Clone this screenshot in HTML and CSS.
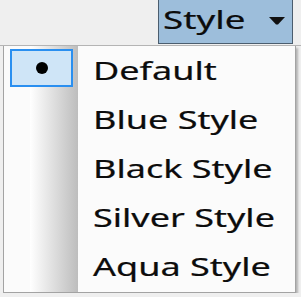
FILE: index.html
```html
<!DOCTYPE html>
<html lang="en">
<head>
  <meta charset="UTF-8">
  <title>Style Menu</title>
  <link rel="stylesheet" href="styles.css">
</head>
<body>

<div class="toolbar">
  <div class="style-btn">
    <span class="wide">Style</span>
    <svg class="arrow" width="16" height="8" viewBox="0 0 16 8">
      <path d="M0 0 H16 L9 7.5 H7 Z" fill="#111"/>
    </svg>
  </div>
</div>

<div class="menu">
  <div class="item">
    <div class="check checked"><span class="dot"></span></div>
    <span class="label wide">Default</span>
  </div>
  <div class="item">
    <div class="check"></div>
    <span class="label wide">Blue Style</span>
  </div>
  <div class="item">
    <div class="check"></div>
    <span class="label wide">Black Style</span>
  </div>
  <div class="item">
    <div class="check"></div>
    <span class="label wide">Silver Style</span>
  </div>
  <div class="item">
    <div class="check"></div>
    <span class="label wide">Aqua Style</span>
  </div>
</div>

</body>
</html>
```

FILE: styles.css
```css
body {
  margin: 0;
  background-color: #efefef;
  font-family: "Noto Sans", "Open Sans", sans-serif;
  color: #0c0c0c;
}
.wide {
  display: inline-block;
  transform: scaleX(1.47);
  transform-origin: left center;
  -webkit-text-stroke: 0.2px #0c0c0c;
}
.toolbar {
  height: 46px;
  display: flex;
  justify-content: flex-end;
  padding-right: 8px;
  border-bottom: 1px solid #b4b4b4;
  box-sizing: border-box;
}
.style-btn {
  width: 135px;
  height: 44px;
  box-sizing: border-box;
  display: flex;
  align-items: flex-start;
  padding: 4px 7px 0 4px;
  background-color: #9dbedb;
  border: 1px solid #4b5d6e;
  border-top: none;
  font-size: 25px;
  line-height: 30px;
}
.arrow {
  margin-left: auto;
  margin-top: 13px;
}
.menu {
  margin-left: 3px;
  width: 293px;
  height: 247px;
  box-sizing: border-box;
  border: 1px solid #a3a3a3;
  border-top: none;
  background: linear-gradient(to right, transparent 26px, #ffffff 26px, #bdbdbd 74px, transparent 74px), #fbfbfb;
  box-shadow: 2px 2px 2px rgba(0, 0, 0, 0.25);
}
.item {
  height: 49px;
  display: flex;
  align-items: flex-start;
}
.check {
  width: 63px;
  height: 38px;
  margin: 3px 0 0 6px;
  box-sizing: border-box;
  flex-shrink: 0;
}
.checked {
  background-color: #cfe5f7;
  border: 2px solid #2a8ff0;
  display: flex;
  align-items: center;
  justify-content: center;
}
.dot {
  width: 12px;
  height: 12px;
  border-radius: 50%;
  background-color: #000;
}
.label {
  margin-left: 20px;
  font-size: 24.5px;
  line-height: 49px;
}
```
